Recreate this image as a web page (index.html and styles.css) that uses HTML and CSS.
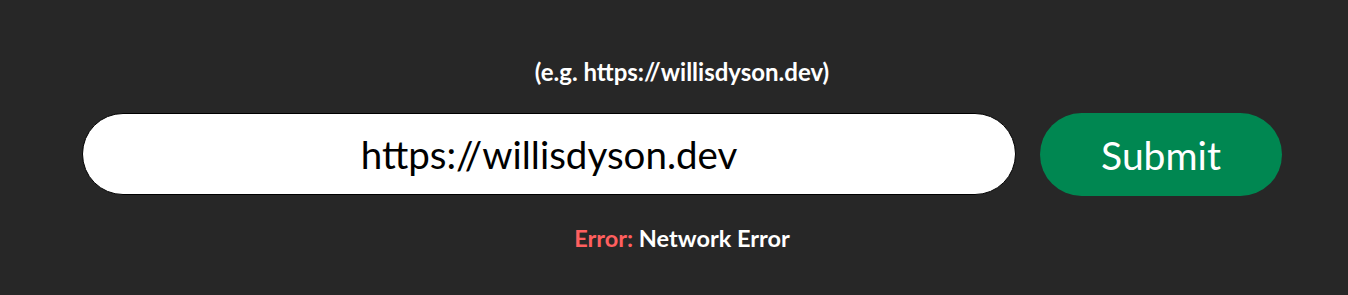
FILE: index.html
```html
<!DOCTYPE html>
<html lang="en">
<head>
<meta charset="utf-8">
<title>URL check</title>
<link rel="stylesheet" href="styles.css">
</head>
<body>
<main class="page">
  <div class="content">
    <p class="hint">(e.g. https://willisdyson.dev)</p>
    <form class="row">
      <input class="url-input" type="text" value="https://willisdyson.dev">
      <button class="submit" type="button">Submit</button>
    </form>
    <p class="error"><span class="error-label">Error:</span> Network Error</p>
  </div>
</main>
</body>
</html>
```

FILE: styles.css
```css
html, body {
  margin: 0;
  padding: 0;
  background: #272727;
  height: 100%;
}

body {
  font-family: "Lato", "Noto Sans", sans-serif;
  color: #ffffff;
}

.page {
  display: flex;
  justify-content: center;
  padding-left: 16px;
  padding-top: 57px;
}

.content {
  width: 1200px;
  display: flex;
  flex-direction: column;
  align-items: center;
}

.hint {
  margin: 0;
  font-size: 24px;
  font-weight: 700;
  line-height: 30px;
}

.row {
  margin-top: 26px;
  width: 100%;
  display: flex;
  gap: 24px;
}

.url-input {
  box-sizing: border-box;
  flex: 0 0 934px;
  height: 82px;
  border: 1px solid #000;
  border-radius: 41px;
  background: #fff;
  color: #000;
  font-family: inherit;
  font-size: 38.5px;
  text-align: center;
  padding: 0 20px;
  outline: none;
}

.submit {
  flex: 0 0 242px;
  height: 83px;
  border: none;
  border-radius: 42px;
  background: #008751;
  color: #fff;
  font-family: inherit;
  font-size: 39px;
  padding: 0;
}

.error {
  margin: 27px 0 0;
  font-size: 23.5px;
  font-weight: 700;
  line-height: 30px;
}

.error-label {
  color: #ff5f5f;
}
```
